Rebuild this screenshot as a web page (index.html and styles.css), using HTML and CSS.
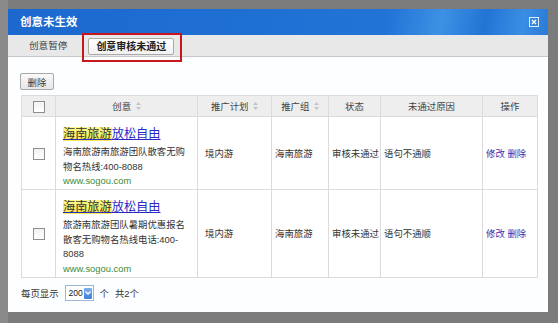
FILE: index.html
```html
<!DOCTYPE html>
<html>
<head>
<meta charset="utf-8">
<link rel="stylesheet" href="styles.css">
</head>
<body>
<div class="page">
  <div class="dialog">
    <div class="titlebar">
      <span class="title">创意未生效</span>
      <svg class="close" width="10" height="10" viewBox="0 0 10 10">
        <rect x="0.5" y="0.5" width="9" height="9" fill="none" stroke="#dfeeff" stroke-width="1"/>
        <path d="M3 3 L7 7 M7 3 L3 7" stroke="#ffffff" stroke-width="1.4"/>
      </svg>
    </div>
    <div class="tabs">
      <span class="tab">创意暂停</span>
      <span class="tab active">创意审核未通过</span>
      <span class="mark"></span>
    </div>
    <div class="content">
      <div class="toolbar"><span class="btn">删除</span></div>
      <table class="grid">
        <colgroup>
          <col class="c1"><col class="c2"><col class="c3"><col class="c4"><col class="c5"><col class="c6"><col class="c7">
        </colgroup>
        <thead>
          <tr>
            <th><span class="cb"></span></th>
            <th>创意 <svg class="sort" width="5" height="8" viewBox="0 0 5 8"><path d="M2.5 0 L5 3 L0 3 Z M2.5 8 L5 5 L0 5 Z" fill="#c4c4c4"/></svg></th>
            <th>推广计划 <svg class="sort" width="5" height="8" viewBox="0 0 5 8"><path d="M2.5 0 L5 3 L0 3 Z M2.5 8 L5 5 L0 5 Z" fill="#c4c4c4"/></svg></th>
            <th>推广组 <svg class="sort" width="5" height="8" viewBox="0 0 5 8"><path d="M2.5 0 L5 3 L0 3 Z M2.5 8 L5 5 L0 5 Z" fill="#c4c4c4"/></svg></th>
            <th>状态</th>
            <th>未通过原因</th>
            <th>操作</th>
          </tr>
        </thead>
        <tbody>
          <tr class="r1">
            <td class="ck"><span class="cb"></span></td>
            <td class="idea">
              <div class="ad-title"><span class="hl">海南旅游</span>放松自由</div>
              <div class="desc">海南旅游南旅游团队散客无购<br>物名热线:400-8088</div>
              <div class="url">www.sogou.com</div>
            </td>
            <td class="plan">境内游</td>
            <td>海南旅游</td>
            <td>审核未通过</td>
            <td>语句不通顺</td>
            <td class="ops"><a>修改</a> <a>删除</a></td>
          </tr>
          <tr class="r2">
            <td class="ck"><span class="cb"></span></td>
            <td class="idea">
              <div class="ad-title"><span class="hl">海南旅游</span>放松自由</div>
              <div class="desc">旅游南旅游团队暑期优惠报名<br>散客无购物名热线电话:400-<br>8088</div>
              <div class="url">www.sogou.com</div>
            </td>
            <td class="plan">境内游</td>
            <td>海南旅游</td>
            <td>审核未通过</td>
            <td>语句不通顺</td>
            <td class="ops"><a>修改</a> <a>删除</a></td>
          </tr>
        </tbody>
      </table>
      <div class="pager">
        <span>每页显示</span>
        <span class="select"><span class="val">200</span><span class="drop"><svg width="6" height="4" viewBox="0 0 6 4"><path d="M0.5 0.5 L3 3 L5.5 0.5" fill="none" stroke="#ffffff" stroke-width="1.3"/></svg></span></span>
        <span>个</span>
        <span>共2个</span>
      </div>
    </div>
  </div>
</div>
</body>
</html>
```
FILE: styles.css
```css
html, body {
  margin: 0;
  padding: 0;
}
body {
  background: #7b7b7b;
  font-family: "Liberation Sans", "Noto Sans CJK SC", sans-serif;
}
.page {
  width: 558px;
  height: 323px;
  box-sizing: border-box;
  padding: 9px 0 0 8px;
  overflow: hidden;
  background: linear-gradient(to right, #8a8a8a 0, #8a8a8a 8px, #7b7b7b 8px);
}
.dialog {
  width: 540px;
  height: 303px;
  background: #fdfeff;
  position: relative;
  display: flex;
  flex-direction: column;
}
.titlebar {
  height: 26px;
  flex: none;
  background: linear-gradient(100deg, #1c68cf 0%, #2174d6 70%, #3d91e4 80%, #2274d5 88%, #3a8ee2 95%, #2a7ad8 100%);
  display: flex;
  align-items: center;
  justify-content: space-between;
  padding: 0 9px 0 12px;
}
.title {
  color: #fff;
  font-weight: bold;
  font-size: 11.5px;
  line-height: 14px;
}
.close {
  display: block;
}
.tabs {
  height: 21px;
  flex: none;
  background: #e8e8e8;
  border-bottom: 1px solid #c8c8c8;
  display: flex;
  align-items: center;
  padding-left: 21px;
  position: relative;
  font-size: 9.6px;
  color: #444;
}
.tab {
  margin-right: 21px;
  line-height: 12px;
}
.tab.active {
  width: 86px;
  height: 17px;
  box-sizing: border-box;
  border: 1px solid #a9a9a9;
  border-radius: 2px;
  background: linear-gradient(#ffffff, #f1f1f1);
  font-weight: bold;
  font-size: 10px;
  color: #222;
  display: flex;
  align-items: center;
  justify-content: center;
  align-self: flex-start;
  margin-top: 3px;
}
.mark {
  position: absolute;
  left: 74px;
  top: -2px;
  width: 100px;
  height: 29px;
  box-sizing: border-box;
  border: 2px solid #c8161d;
}
.content {
  padding: 16px 11px 0 13px;
  font-size: 9.4px;
  color: #333;
}
.toolbar {
  display: flex;
}
.btn {
  width: 34px;
  height: 17px;
  box-sizing: border-box;
  margin-left: -1px;
  border: 1px solid #a8a8a8;
  border-radius: 2px;
  background: linear-gradient(#fafafa, #e6e6e6);
  display: flex;
  align-items: center;
  justify-content: center;
  color: #333;
}
.grid {
  margin-top: 5px;
  width: 516px;
  border-collapse: collapse;
  table-layout: fixed;
}
.c1 { width: 34px; }
.c2 { width: 142px; }
.c3 { width: 74px; }
.c4 { width: 57px; }
.c5 { width: 52px; }
.c6 { width: 102px; }
.c7 { width: 55px; }
.grid th,
.grid td {
  border: 1px solid #dcdcdc;
  padding: 0 3px;
  line-height: 13px;
  white-space: nowrap;
}
.grid th {
  height: 21px;
  box-sizing: border-box;
  background: #eeeeee;
  font-weight: normal;
  color: #444;
  text-align: center;
}
.sort {
  vertical-align: -0.5px;
  margin-left: 2px;
}
.grid td {
  vertical-align: middle;
  background: #fff;
}
.grid td.ck {
  text-align: center;
  padding: 0;
}
.cb {
  display: inline-block;
  width: 10px;
  height: 10px;
  border: 1px solid #8e8e8e;
  background: linear-gradient(#f2f2f2, #ffffff);
  vertical-align: middle;
}
.grid td.idea {
  padding: 8px 6px 0 7px;
  vertical-align: top;
  white-space: normal;
}
.r1 td.idea { height: 64px; }
.r2 td.idea { height: 79px; }
.ad-title {
  font-size: 12.2px;
  line-height: 18px;
  color: #2a2ac4;
  text-decoration: underline;
  text-decoration-color: #2a2ac4;
  margin-bottom: 2px;
  white-space: nowrap;
}
.hl {
  background: linear-gradient(#fdf98a, #f6ea4e);
  color: #333;
}
.desc {
  line-height: 14.5px;
  color: #333;
}
.url {
  line-height: 14.5px;
  color: #3c8c3c;
}
.grid td.plan {
  padding-left: 7px;
}
.ops a {
  color: #3333b0;
}
.pager {
  margin-top: 7px;
  display: flex;
  align-items: center;
  gap: 6px;
  color: #333;
}
.select {
  width: 29px;
  height: 16px;
  box-sizing: border-box;
  border: 1px solid #9fb7d6;
  background: #fff;
  display: flex;
  align-items: center;
  justify-content: space-between;
  padding: 0 1px 0 3px;
  font-size: 8.6px;
  color: #222;
}
.drop {
  width: 8px;
  height: 11px;
  flex: none;
  background: linear-gradient(#7fb0ee, #3f7fd6);
  border-radius: 1px;
  display: flex;
  align-items: center;
  justify-content: center;
}
.drop svg {
  display: block;
}
```
